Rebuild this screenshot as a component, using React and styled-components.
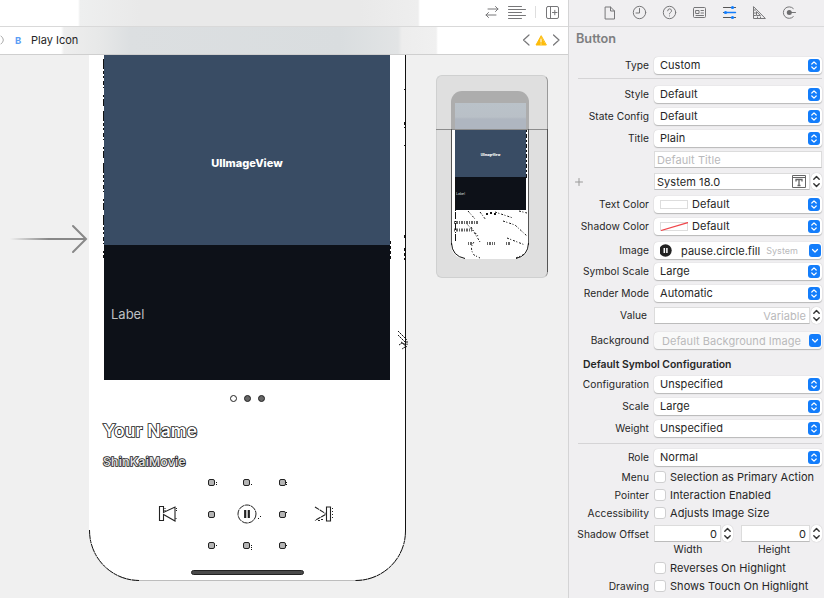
import React from "react";
import styled, { createGlobalStyle } from "styled-components";

const Global = createGlobalStyle`
  * { box-sizing: border-box; }
  body { margin: 0; overflow: hidden; font-family: Inter, "Liberation Sans", sans-serif; color: #262626; }
  svg { display: block; flex: none; }
`;

const Window = styled.div`
  display: flex;
  width: 824px;
  height: 598px;
  overflow: hidden;
  background: #f0f0f0;
`;

/* ---------- editor ---------- */
const Editor = styled.main`
  display: flex;
  flex-direction: column;
  width: 568px;
`;

const Toolbar = styled.div`
  display: flex;
  align-items: center;
  justify-content: flex-end;
  height: 27px;
  padding: 0 8px 2px 0;
  border-bottom: 1px solid #d9d9d9;
  background: linear-gradient(90deg, #fff 78px, #eeefef 80px, #e9e9e9 140px, #e9e9e9 360px, #eee 418px, #fff 420px);
`;

const ToolbarRule = styled.div`
  width: 1px;
  height: 12px;
  margin: 0 9px;
  background: #dedede;
`;

const Crumbs = styled.div`
  display: flex;
  align-items: center;
  height: 28px;
  padding: 0 8px 1px 0;
  border-bottom: 1px solid #cfcfcf;
  background: linear-gradient(90deg, #fff 61px, #eee 64px, #e7e8e8 100px, #dcdfe1 130px, #d9dddf 340px, #e2e4e5 398px, #ededed 402px, #f0f0f0 436px, #fff 438px);
`;

const CrumbKind = styled.span`
  width: 16px;
  margin-left: 11px;
  color: #5b9df5;
  font-size: 9.5px;
  font-weight: 700;
`;

const CrumbName = styled.span`
  flex: 1;
  font-size: 11px;
`;

const Canvas = styled.div`
  display: flex;
  align-items: flex-start;
  height: 543px;
  background: #f0f0f0;
`;

const Entry = styled.div`
  width: 89px;
  padding: 168px 0 0 10px;
`;

const PhoneFrame = styled.div`
  position: relative;
  width: 317px;
  height: 526px;
  padding-left: 15px;
  border-bottom: 1px solid #bdbdbd;
  border-radius: 0 0 50px 50px;
  background: #fff;
`;

const PhoneEdge = styled.svg`
  position: absolute;
  left: 0;
  top: 0;
`;

const Cover = styled.div`
  display: flex;
  align-items: center;
  justify-content: center;
  width: 286px;
  height: 190px;
  padding-top: 25px;
  background: #394c64;
  color: #fff;
  font-size: 11px;
  font-weight: 800;
`;

const Caption = styled.div`
  display: flex;
  align-items: center;
  width: 286px;
  height: 135px;
  padding: 3px 0 0 7px;
  background: #0d1118;
  color: #bfc0c2;
  font-size: 13px;
`;

const Pager = styled.div`
  display: flex;
  justify-content: center;
  gap: 7px;
  width: 287px;
  margin-top: 15px;
`;

const PageDot = styled.i`
  width: 7px;
  height: 7px;
  border: 1px solid #222;
  border-radius: 50%;
  background: ${(p) => (p.$current ? "#fff" : "#666")};
`;

const Heading = styled.div`
  height: ${(p) => p.$height}px;
  margin: ${(p) => p.$top}px 0 0 -1px;
  color: ${(p) => p.$fill};
  font-size: ${(p) => p.$size}px;
  font-weight: 600;
  line-height: ${(p) => p.$height}px;
  letter-spacing: ${(p) => p.$spacing}px;
  -webkit-text-stroke: ${(p) => p.$stroke}px #222;
  paint-order: stroke fill;
`;

const Player = styled.div`
  display: flex;
  align-items: center;
  margin: 7px 0 0 54px;
`;

const HandleGrid = styled.div`
  display: grid;
  grid-template-columns: 35px 36px 8px;
  grid-template-rows: 32px 31px 8px;
  width: 79px;
  height: 71px;
  margin: 0 26px 0 31px;
`;

const Handle = styled.i`
  width: 7px;
  height: 7px;
  margin-top: 1px;
  border: 1px solid #222;
  border-radius: 2px;
  background: #b5b5b5;
`;

const CenterCell = styled.div`
  margin: -6px 0 0 -6px;
`;

const HomeBar = styled.div`
  width: 113px;
  height: 5px;
  margin: 21px 0 0 87px;
  border: 1px solid #222;
  border-radius: 3px;
  background: #4a4a4a;
`;

const Minimap = styled.div`
  position: relative;
  width: 112px;
  height: 203px;
  margin: 20px 0 0 30px;
  padding: 15px 0 0 14px;
  border: 1px solid #cfd0d0;
  border-right-color: #999;
  border-radius: 6px;
  background: #dfdfdf;
`;

const MiniPhone = styled.div`
  width: 78px;
  height: 168px;
  padding: 12px 3px 0 4px;
  border-radius: 11px 11px 14px 14px;
  background: linear-gradient(#adadad 38px, #fff 38px);
`;

const MiniHeader = styled.div`
  height: 26px;
  background: linear-gradient(#bac2c9, #b9c0c7 14px, #afb6c0 16px);
`;

const MiniCover = styled.div`
  height: 48px;
  padding-top: 22px;
  background: #394c64;
  color: #fff;
  font-size: 3px;
  font-weight: 800;
  line-height: 9px;
  text-align: center;
`;

const MiniCaption = styled.div`
  height: 33px;
  padding: 14px 0 0 1px;
  background: #0d1118;
  color: #ddd;
  font-size: 3.5px;
  line-height: 6px;
`;

const MiniTrace = styled.svg`
  position: absolute;
  left: -1px;
  top: -1px;
`;

/* ---------- inspector ---------- */
const Inspector = styled.aside`
  width: 256px;
  border-left: 1px solid #d4d4d5;
  background: #f0eff1;
`;

const Tabs = styled.nav`
  display: flex;
  align-items: center;
  gap: 14px;
  height: 27px;
  padding: 0 0 1px 33px;
  border-bottom: 1px solid #dadadb;
`;

const Title = styled.h1`
  height: 27px;
  margin: 0;
  padding-left: 7px;
  color: #7e7e80;
  font-size: 12.7px;
  font-weight: 600;
  line-height: 24px;
`;

const Row = styled.div`
  display: flex;
  align-items: center;
  height: ${(p) => p.$height || 22}px;
  margin-top: ${(p) => p.$top || 0}px;
`;

const Label = styled.span`
  display: flex;
  justify-content: flex-end;
  flex: none;
  width: ${(p) => (p.$inset ? 78 : 80)}px;
  margin-right: ${(p) => (p.$inset ? 7 : 5)}px;
  padding-top: ${(p) => p.$drop || 0}px;
  font-size: 10.2px;
  line-height: 13px;
  letter-spacing: 0.05px;
  white-space: nowrap;
`;

const AddCell = styled(Label)`
  justify-content: flex-start;
  padding: 0 0 0 6px;
`;

const Rule = styled.hr`
  width: 244px;
  height: 1px;
  margin: ${(p) => p.$top}px 0 ${(p) => p.$bottom}px 9px;
  border: 0;
  background: #d5d4d6;
`;

const Popup = styled.div`
  display: flex;
  align-items: center;
  width: 168px;
  height: 17px;
  padding: 0 ${(p) => (p.$combo ? 1 : 2)}px 0 ${(p) => (p.$muted ? 8 : 6)}px;
  border-radius: 4px;
  background: ${(p) => (p.$muted ? "#f9f9f9" : "#fff")};
  box-shadow: 0 0 1px #bbb, 0 1px 1px #b8b8b8;
  color: ${(p) => (p.$muted ? "#b9b9bb" : "#262626")};
  font-size: 11px;
  letter-spacing: 0.04px;
  white-space: nowrap;
`;

const PopupText = styled.span`
  flex: 1;
`;

const Hint = styled.small`
  margin-right: 11px;
  color: #b9b9bb;
  font-size: 9px;
`;

const Field = styled.div`
  display: flex;
  align-items: center;
  justify-content: ${(p) => (p.$right ? "flex-end" : "space-between")};
  width: ${(p) => p.$width}px;
  height: 17px;
  padding: 0 3px 0 2px;
  border: 1px solid #dcdcdc;
  border-bottom-color: #bcbcbc;
  background: #fff;
  color: ${(p) => (p.$muted ? "#b9b9bb" : "#262626")};
  font-size: 11px;
  letter-spacing: 0.06px;
`;

const StepperBox = styled.span`
  display: flex;
  margin: 0 ${(p) => p.$after || 0}px 0 1px;
  border-radius: 5px;
  background: #fff;
  box-shadow: 0 0 1px #aaa;
`;

const Swatch = styled.svg`
  margin-right: 4px;
`;

const Section = styled.h2`
  height: 19px;
  margin: 0;
  padding-left: 14px;
  font-size: 10.4px;
  font-weight: 600;
  line-height: 22px;
`;

const Checkbox = styled.span`
  width: 12px;
  height: 12px;
  margin-right: 4px;
  border: 1px solid #cfcfd0;
  border-radius: 3px;
  background: #fff;
`;

const CheckText = styled.span`
  font-size: 11px;
  letter-spacing: 0.04px;
  white-space: nowrap;
`;

const AxisNames = styled.div`
  display: grid;
  grid-template-columns: 68px 104px;
  height: 8px;
  padding-left: 85px;
  font-size: 10.4px;
  line-height: 9px;
  text-align: center;
`;

const line = { fill: "none", stroke: "#777779", strokeWidth: 1, strokeLinecap: "round", strokeLinejoin: "round" };

const BlueArrows = ({ single }) => (
  <svg width="12" height="13" viewBox="0 0 12 13">
    <rect width="12" height="13" rx="3" fill="#137dfb" />
    <path d={single ? "M3.5 5.5 6 8 8.5 5.5" : "M3.8 5 6 2.9 8.2 5M3.8 8 6 10.1 8.2 8"} fill="none" stroke="#fff" strokeWidth="1.2" strokeLinecap="round" strokeLinejoin="round" />
  </svg>
);

const Stepper = ({ after }) => (
  <StepperBox $after={after}>
    <svg width="11" height="17" viewBox="0 0 11 17">
      <path d="M2.8 6.3 5.5 3.5 8.2 6.3M2.8 10.7 5.5 13.5 8.2 10.7" fill="none" stroke="#333" strokeWidth="1.4" strokeLinecap="round" strokeLinejoin="round" />
    </svg>
  </StepperBox>
);

const SelectRow = ({ label, value, children, single, muted, hint, ...size }) => (
  <Row {...size}>
    <Label>{label}</Label>
    <Popup $muted={muted} $combo={single}>
      {children}
      <PopupText>{value}</PopupText>
      {hint && <Hint>{hint}</Hint>}
      <BlueArrows single={single} />
    </Popup>
  </Row>
);

const CheckRow = ({ label, text, top }) => (
  <Row $height={18} $top={top}>
    <Label>{label}</Label>
    <Checkbox />
    <CheckText>{text}</CheckText>
  </Row>
);

const InspectorTabs = () => (
  <Tabs>
    <svg width="16" height="16" viewBox="0 0 16 16" {...line}><path d="M3.5 2h5l4 4v8h-9zM8.5 2v4h4" /></svg>
    <svg width="16" height="16" viewBox="0 0 16 16" {...line}><circle cx="7.5" cy="7.5" r="6.2" /><path d="M7.5 3.5v4.5H4" /></svg>
    <svg width="16" height="16" viewBox="0 0 16 16" {...line}><circle cx="7.5" cy="7.5" r="6.2" /><path d="M5.7 5.8a1.9 1.9 0 1 1 2.7 1.7Q7.5 7.900 7.500 8.900M7.500 10.900v.1" /></svg>
    <svg width="16" height="16" viewBox="0 0 16 16" {...line}><rect x="1.5" y="2.5" width="12" height="10" rx="1" /><path d="M4 5.500h3v3H4zM9 5.500h2.500M9 8h2.500M4 10.500h7.500" /></svg>
    <svg width="16" height="16" viewBox="0 0 16 16" {...line}><path d="M1.500 2.500h12M1.500 7.500h12M1.500 12.500h12" stroke="#555" strokeWidth="1.2" /><path d="M4 7.500h9.500" stroke="#137dfb" strokeWidth="1.4" /><g fill="#137dfb" stroke="none"><circle cx="10.500" cy="2.500" r="1.600" /><circle cx="3.500" cy="7.500" r="1.600" /><circle cx="10.500" cy="12.500" r="1.600" /></g></svg>
    <svg width="16" height="16" viewBox="0 0 16 16" {...line}><path d="M1.500 2V13.500H13zM4.500 7v3.500H8zM2 5h1.500M2 8h1.500M2 10.500h1.500M5.500 13v-1M8.500 13v-1" /></svg>
    <svg width="16" height="16" viewBox="0 0 16 16" {...line}><path d="M11.300 3.500A5.800 5.800 0 1 0 11.300 11.700M8 7.500h5.500" /><circle cx="7.300" cy="7.500" r="2.500" fill="#6c6c6e" stroke="none" /></svg>
  </Tabs>
);

const Skip = ({ forward }) => forward ? (
  <svg width="22" height="18" viewBox="0 0 22 18" fill="none" stroke="#222" strokeWidth="1.1">
    <path d="M2 2 12.500 8.500M12.500 9.500 2 15.500" strokeDasharray="5 .7" /><path d="M5 15.500h2M8 14.500h2" /><path d="M13.500 2h4v14h-4z" /><path d="M19 3.500h2M19 6.500h1M19 9.500h1M19 12.500h1" strokeDasharray="1 1" />
  </svg>
) : (
  <svg width="19" height="18" viewBox="0 0 19 18" fill="none" stroke="#222" strokeWidth="1.1">
    <path d="M1.500 1.500h4v6L17 2v14L5.500 9.500v6h-4z" /><path d="M7 3v3M18.500 3v3M18 13v2" strokeDasharray="1 1" />
  </svg>
);

const Phone = () => (
  <PhoneFrame>
    <Cover>UIImageView</Cover>
    <Caption>Label</Caption>
    <Pager><PageDot $current /><PageDot /><PageDot /></Pager>
    <Heading $size={17.5} $height={24} $top={17} $spacing={0.15} $stroke={1.7} $fill="#fff">Your Name</Heading>
    <Heading $size={12} $height={18} $top={10} $spacing={0.28} $stroke={1.5} $fill="#ddd">ShinKaiMovie</Heading>
    <Player>
      <Skip />
      <HandleGrid>
        <Handle /><Handle /><Handle /><Handle />
        <CenterCell>
          <svg width="20" height="20" viewBox="0 0 20 20"><circle cx="10" cy="10" r="9" fill="#fff" stroke="#222" strokeDasharray="6 .6" /><path d="M8.2 6v8M11.8 6v8" stroke="#222" strokeWidth="2.2" /></svg>
        </CenterCell>
        <Handle /><Handle /><Handle /><Handle />
      </HandleGrid>
      <Skip forward />
    </Player>
    <HomeBar />
    <PhoneEdge width="325" height="527" viewBox="0 0 325 527" fill="none" stroke="#111">
      <path d="M316.500 0V476" />
      <path d="M316.500 476A50 49.500 0 0 1 266.500 525.500M.5 475A50 50 0 0 0 50 525.500" strokeDasharray="9 .5 4 .7" />
      <path d="M14.500 4V203" strokeDasharray="10 2 3 2 2 3 4 2 1 7 2 2 7 5" />
      <path d="M301.500 186V204M315.500 34v1M315.500 67v6M315.500 90v1M315.500 180v5M315.500 193v12" strokeDasharray="3 2" />
      <path d="M309 276l9 9M309 280l7 7M310 290l3-2 5 4M312 287l5 3M316 292l-3 2M318 286v4" strokeDasharray="2 .6" />
      <path d="M127.500 427v3M162.500 429v2M197.500 427v3M127.500 490v2M162.500 490v5M197.500 490v2M197.500 457v2M169.500 463v2M171 461.500h1" strokeDasharray="1 1" />
    </PhoneEdge>
  </PhoneFrame>
);

const Preview = () => (
  <Minimap>
    <MiniPhone>
      <MiniHeader />
      <MiniCover>UIImageView</MiniCover>
      <MiniCaption>Label</MiniCaption>
    </MiniPhone>
    <MiniTrace width="112" height="203" viewBox="0 0 112 203" fill="none" stroke="#111">
      <path d="M0 54.500h112" stroke="#8c8c8c" />
      <path d="M15.500 54V170M92.500 54V170M111.500 54V197" stroke="#555" />
      <path d="M15.500 168Q16 181 29 183.500M92.500 168Q92 181 80 183.500" />
      <path d="M90.500 55V104" strokeDasharray="2 2 4 2" />
      <path d="M19.500 104V168" strokeDasharray="7 2 1 1" />
      <path d="M32 136l7 8M30 148l13 14M35 152l9 15M59 137l18 6M67 146l12 4 12 11M44 137l6 8M83 136l8 2M71 163l18 7M38 167q-5 6 0 13l6 3M80 183l9-4" strokeDasharray="2 1.5 1 2" />
      <path d="M50 139h3M54 138h2M58 139h3" strokeWidth="2" strokeDasharray="2 1" />
      <path d="M18 147.500h25M18 155h18M32 168.500h5M51 168.500h8M70 168.500h5" strokeWidth="3" strokeDasharray="1 1 2 1" stroke="#666" />
    </MiniTrace>
  </Minimap>
);

export default function App() {
  return (
    <Window>
      <Global />
      <Editor>
        <Toolbar>
          <svg width="14" height="14" viewBox="0 0 14 14" {...line}><path d="M3 4h10M10.500 1.500 13 4l-2.500 2.500M11 10H1M3.500 7.500 1 10l2.500 2.500" /></svg>
          <svg width="27" height="14" viewBox="0 0 27 14" {...line}><path d="M9.500 1.500h13M9.500 4.500h17M9.500 7.500h13M9.500 10.500h17M9.500 13.500h13" /></svg>
          <ToolbarRule />
          <svg width="15" height="15" viewBox="0 0 15 15" {...line}><rect x="1.500" y="1.500" width="12" height="12" rx="1.500" /><path d="M5.500 1.500v12M7.500 7.500h4.500M9.800 5.300v4.500" /></svg>
        </Toolbar>
        <Crumbs>
          <svg width="4" height="12" viewBox="0 0 4 12" {...line}><path d="M1 2q5 4 0 8" stroke="#aaa" /></svg>
          <CrumbKind>B</CrumbKind>
          <CrumbName>Play Icon</CrumbName>
          <svg width="38" height="16" viewBox="0 0 38 16" {...line}>
            <path d="M7 3 1.500 8 7 13M31.500 3 37 8l-5.500 5" strokeWidth="1.2" />
            <path d="M19 4 14 13h10z" fill="#fdbc0b" stroke="#fdbc0b" /><path d="M19 7v3M19 12v.1" stroke="#fff" />
          </svg>
        </Crumbs>
        <Canvas>
          <Entry>
            <svg width="79" height="32" viewBox="0 0 79 32" fill="none" strokeWidth="2">
              <defs><linearGradient id="fade" x1="0" x2="77" y1="0" y2="0" gradientUnits="userSpaceOnUse"><stop stopColor="#888" stopOpacity="0" /><stop offset=".5" stopColor="#888" /></linearGradient></defs>
              <path d="M0 16h76" stroke="url(#fade)" /><path d="M63 3 76 16 63 29" stroke="#888" strokeLinecap="round" />
            </svg>
          </Entry>
          <Phone />
          <Preview />
        </Canvas>
      </Editor>
      <Inspector>
        <InspectorTabs />
        <Title>Button</Title>
        <SelectRow label="Type" value="Custom" />
        <Rule $top={2} $bottom={4} />
        <SelectRow label="Style" value="Default" />
        <SelectRow label="State Config" value="Default" />
        <SelectRow label="Title" value="Plain" />
        <Row $height={21}><Label /><Field $width={168} $muted>Default Title</Field></Row>
        <Row $height={23}>
          <AddCell><svg width="8" height="8" viewBox="0 0 8 8" {...line}><path d="M4 .5v7M.5 4h7" stroke="#999" /></svg></AddCell>
          <Field $width={156}>
            System 18.0
            <svg width="14" height="13" viewBox="0 0 14 13" fill="none" stroke="#666"><path d="M.5 .5h13v12H.5zM.5 2.500h13" /><path d="M4 6.500v-2h6v2M7 4.500v6M5.500 10.500h3" strokeWidth="1.3" /></svg>
          </Field>
          <Stepper />
        </Row>
        <SelectRow label="Text Color" value="Default"><Swatch width="28" height="9" viewBox="0 0 28 9"><rect x=".5" y=".5" width="27" height="8" fill="#fff" stroke="#ddd" /></Swatch></SelectRow>
        <SelectRow label="Shadow Color" value="Default"><Swatch width="28" height="9" viewBox="0 0 28 9"><rect x=".5" y=".5" width="27" height="8" fill="#fff" stroke="#ddd" /><path d="M1 8.500 28 .5" stroke="#f0474b" strokeWidth="1.2" /></Swatch></SelectRow>
        <SelectRow label="Image" value="pause.circle.fill" hint="System" single $height={19} $top={4}>
          <Swatch width="17" height="13" viewBox="0 0 17 13"><circle cx="5.500" cy="6.500" r="6.200" fill="#222" /><path d="M4.300 4v5M6.900 4v5" stroke="#fff" strokeWidth="1.5" /></Swatch>
        </SelectRow>
        <SelectRow label="Symbol Scale" value="Large" />
        <SelectRow label="Render Mode" value="Automatic" />
        <Row $height={23}><Label $inset>Value</Label><Field $width={156} $right $muted>Variable</Field><Stepper /></Row>
        <SelectRow label="Background" value="Default Background Image" muted single $height={27} />
        <Section>Default Symbol Configuration</Section>
        <SelectRow label="Configuration" value="Unspecified" />
        <SelectRow label="Scale" value="Large" />
        <SelectRow label="Weight" value="Unspecified" />
        <Rule $top={4} $bottom={2} />
        <SelectRow label="Role" value="Normal" />
        <CheckRow label="Menu" text="Selection as Primary Action" />
        <CheckRow label="Pointer" text="Interaction Enabled" />
        <CheckRow label="Accessibility" text="Adjusts Image Size" />
        <Row $height={23}>
          <Label $drop={1}>Shadow Offset</Label>
          <Field $width={67} $right>0</Field><Stepper after={8} />
          <Field $width={69} $right>0</Field><Stepper />
        </Row>
        <AxisNames><span>Width</span><span>Height</span></AxisNames>
        <CheckRow text="Reverses On Highlight" top={6} />
        <CheckRow label="Drawing" text="Shows Touch On Highlight" />
      </Inspector>
    </Window>
  );
}
